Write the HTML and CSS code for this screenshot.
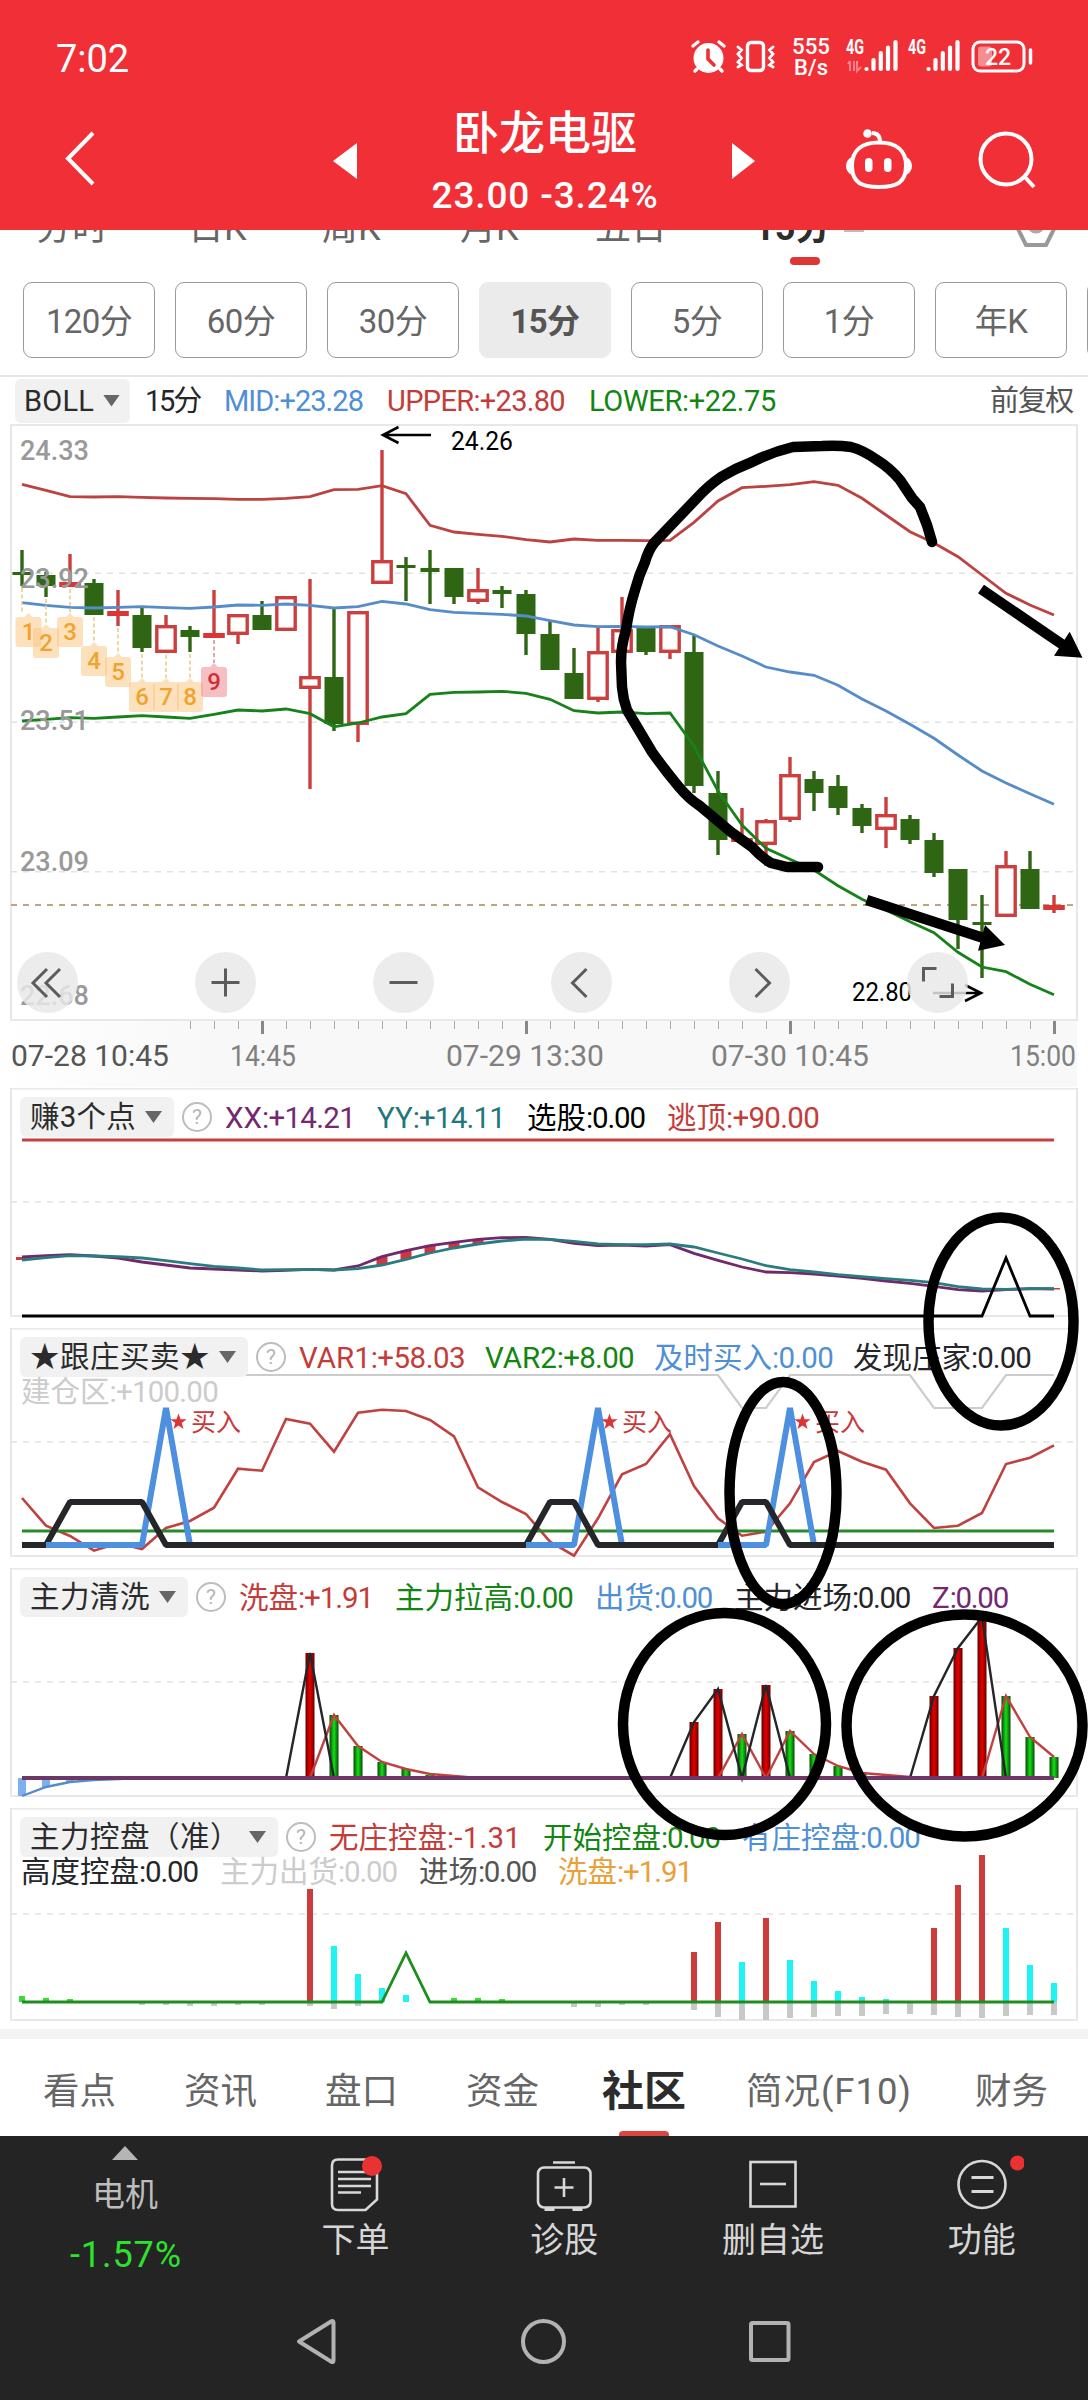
FILE: index.html
```html
<!DOCTYPE html>
<html lang="zh-CN">
<head>
<meta charset="utf-8">
<title>卧龙电驱</title>
<link rel="stylesheet" href="styles.css">
</head>
<body>
<div class="screen">
  <header class="top">
    <div class="status">
      <span class="clock fit" data-w="73">7:02</span>
      <svg class="status-icons" width="350" height="44" viewBox="688 36 350 44">
        <g stroke="#fff" fill="none" stroke-linecap="round">
          <circle cx="708.5" cy="59" r="15" fill="#fff" stroke="none"/>
          <path d="M693 47l5-4M719 43l5 4M697 70l-2 2M720 70l2 2" stroke-width="3.4"/>
          <path d="M708 51v9l6 6" stroke="#f12f37" stroke-width="3.6"/>
          <rect x="747.500" y="43.500" width="16" height="28" rx="3.500" stroke-width="3.400"/>
          <path d="M738 48l3.500 3-3.500 4 3.500 4-3.500 4 3.500 3-3.500 2M773 48l-3.500 3 3.500 4-3.500 4 3.500 4-3.500 3 3.500 2" stroke-width="2.800"/>
          <path d="M866.500 70v0M873.500 61v9M880.800 54v16M888 48.500v21.500M895.500 43v27M928.500 70v0M935.500 61v9M942.800 54v16M950 48.500v21.500M957.500 43v27" stroke-width="4.200"/>
          <rect x="973" y="43" width="51" height="29" rx="7" stroke-width="3"/>
          <path d="M1030.500 51v13" stroke-width="3.500"/>
        </g>
        <rect x="978" y="47.500" width="14" height="20" rx="3" fill="#fff" opacity=".45"/>
        <path d="M850 62v10M850 62l-2 3M854 62v10M857 62v10l4-4" stroke="#fff" stroke-width="2" opacity=".4" fill="none"/>
        <g fill="#fff" font-weight="500">
          <text x="792" y="55" font-size="22" textLength="38" lengthAdjust="spacingAndGlyphs">555</text>
          <text x="794" y="76" font-size="22" textLength="34">B/s</text>
          <text x="846" y="55" font-size="20" font-weight="700" textLength="18" lengthAdjust="spacingAndGlyphs">4G</text>
          <text x="908" y="55" font-size="20" font-weight="700" textLength="18" lengthAdjust="spacingAndGlyphs">4G</text>
          <text x="985" y="65.500" font-size="23" textLength="26">22</text>
        </g>
      </svg>
    </div>
    <div class="titlebar">
      <svg class="back" width="40" height="60" viewBox="60 128 40 60"><path d="M93 133L68 158.500L93 184" fill="none" stroke="#fff" stroke-width="4"/></svg>
      <svg class="prev" width="24" height="36" viewBox="0 0 24 36"><path d="M24 0v36L0 18z" fill="#fff"/></svg>
      <div class="title">
        <h1>卧龙电驱</h1>
        <p class="fit" data-w="227">23.00 -3.24%</p>
      </div>
      <svg class="next" width="24" height="36" viewBox="0 0 24 36"><path d="M0 0v36l23-18z" fill="#fff"/></svg>
      <svg class="robot" width="70" height="66" viewBox="844 126 70 66">
        <g fill="none" stroke="#fff" stroke-width="4">
          <path d="M879 142.500c17 0 27 8 27 23 0 17-9 21.500-27 21.500s-27-4.500-27-21.500c0-15 10-23 27-23zM880 142c0-6-3-9-8-9"/>
        </g>
        <circle cx="867.500" cy="133.500" r="4.300" fill="#fff"/>
        <path d="M852 157c-8 3-8 15 0 18zM906 157c8 3 8 15 0 18z" fill="#fff"/>
        <rect x="865" y="158" width="7.500" height="14" rx="3.750" fill="#fff"/><rect x="884" y="158" width="7.500" height="14" rx="3.750" fill="#fff"/>
      </svg>
      <svg class="search" width="62" height="62" viewBox="976 128 62 62"><g fill="none" stroke="#fff" stroke-width="4"><circle cx="1006" cy="159" r="25.500"/><path d="M1024 176l10 11"/></g></svg>
    </div>
  </header>

  <nav class="ktabs">
    <span>分时</span><span>日K</span><span>周K</span><span>月K</span><span>五日</span><span class="on">15分<i></i></span>
    <svg width="46" height="52" viewBox="1012 198 46 52"><path d="M1025 202h20l11 21-11 22h-20l-11-22z" fill="none" stroke="#999" stroke-width="4"/><circle cx="1035" cy="224" r="7.500" fill="none" stroke="#aaa" stroke-width="4"/></svg>
  </nav>
  <div class="periods">
    <button>120分</button><button>60分</button><button>30分</button><button class="on">15分</button><button>5分</button><button>1分</button><button>年K</button><button></button>
  </div>

  <div class="boll">
    <span class="chip"><span class="fit" data-w="70">BOLL</span><b class="caret"></b></span>
    <span class="fit c-dark" data-w="55">15分</span>
    <span class="fit c-blue" data-w="139">MID:+23.28</span>
    <span class="fit c-red" data-w="178">UPPER:+23.80</span>
    <span class="fit c-green" data-w="187">LOWER:+22.75</span>
    <span class="adj fit" data-w="83">前复权</span>
  </div>
  <div class="kline"><svg id="kline" width="1088" height="664" viewBox="0 424 1088 664"></svg></div>

  <section class="panel">
    <svg id="p1" width="1088" height="240" viewBox="0 1088 1088 240"></svg>
    <div class="legend">
      <div class="row"><span class="chip"><span class="fit" data-w="106">赚3个点</span><b class="caret"></b></span><em>?</em>
        <span class="fit c-purple" data-w="130">XX<i>:+14.21</i></span><span class="fit c-teal" data-w="128">YY<i>:+14.11</i></span><span class="fit c-black" data-w="118">选股<i>:0.00</i></span><span class="fit c-red" data-w="152">逃顶<i>:+90.00</i></span></div>
    </div>
  </section>
  <section class="panel tight">
    <svg id="p2" width="1088" height="240" viewBox="0 1328 1088 240"></svg>
    <div class="legend">
      <div class="row"><span class="chip"><span class="fit" data-w="180">★跟庄买卖★</span><b class="caret"></b></span><em>?</em>
        <span class="fit c-red" data-w="166">VAR1<i>:+58.03</i></span><span class="fit c-green" data-w="149">VAR2<i>:+8.00</i></span><span class="fit c-blue" data-w="179">及时买入<i>:0.00</i></span><span class="fit c-dark" data-w="178">发现庄家<i>:0.00</i></span></div>
      <div class="row two"><span class="fit c-light" data-w="197">建仓区<i>:+100.00</i></span></div>
    </div>
  </section>
  <section class="panel">
    <svg id="p3" width="1088" height="240" viewBox="0 1568 1088 240"></svg>
    <div class="legend">
      <div class="row"><span class="chip"><span class="fit" data-w="120">主力清洗</span><b class="caret"></b></span><em>?</em>
        <span class="fit c-red" data-w="134">洗盘<i>:+1.91</i></span><span class="fit c-green" data-w="178">主力拉高<i>:0.00</i></span><span class="fit c-blue" data-w="117">出货<i>:0.00</i></span><span class="fit c-dark" data-w="176">主力进场<i>:0.00</i></span><span class="fit c-purple" data-w="76">Z<i>:0.00</i></span></div>
    </div>
  </section>
  <section class="panel last">
    <svg id="p4" width="1088" height="221" viewBox="0 1808 1088 221"></svg>
    <div class="legend">
      <div class="row"><span class="chip"><span class="fit" data-w="210">主力控盘（准）</span><b class="caret"></b></span><em>?</em>
        <span class="fit c-red" data-w="192">无庄控盘<i>:-1.31</i></span><span class="fit c-green" data-w="177">开始控盘<i>:0.00</i></span><span class="fit c-blue" data-w="178">有庄控盘<i>:0.00</i></span></div>
      <div class="row two"><span class="fit c-dark" data-w="177">高度控盘<i>:0.00</i></span><span class="fit c-light" data-w="177">主力出货<i>:0.00</i></span><span class="fit c-grey" data-w="117">进场<i>:0.00</i></span><span class="fit c-orange" data-w="134">洗盘<i>:+1.91</i></span></div>
    </div>
  </section>

  <nav class="sections">
    <span>看点</span><span>资讯</span><span>盘口</span><span>资金</span><span class="on">社区</span><span class="fit" data-w="166">简况(F10)</span><span>财务</span>
  </nav>

  <footer class="bottom">
    <div class="actions">
      <div class="index"><svg width="26" height="14"><path d="M13 0l13 14H0z" fill="#b5b5b5"/></svg><span>电机</span><b class="fit" data-w="112">-1.57%</b></div>
      <div class="act"><svg width="60" height="60" viewBox="326 2153 60 60"><g fill="none" stroke="#d8d8d8" stroke-width="2.600"><path d="M339 2159.500h34q5 0 5 5v35l-11.500 10.500h-27.500q-6 0-6-6v-38.500q0-6 6-6z"/><path d="M339 2172h33M339 2179h33M339 2186h33M339 2192.500h23"/></g><circle cx="373" cy="2166" r="10" fill="#ea3232"/></svg><span>下单</span></div>
      <div class="act"><svg width="60" height="60" viewBox="534.500 2153 60 60"><g fill="none" stroke="#d8d8d8" stroke-width="2.600"><rect x="538.500" y="2167.500" width="52.500" height="40" rx="6"/><path d="M553.500 2162.500h22M555 2187.500h19M564.500 2178v19"/><path d="M545 2209h10M573 2209h10" stroke-width="4"/></g></svg><span>诊股</span></div>
      <div class="act"><svg width="60" height="60" viewBox="743 2153 60 60"><g fill="none" stroke="#d8d8d8" stroke-width="2.600"><rect x="750.500" y="2162" width="45" height="44.500"/><path d="M760 2184h26"/></g></svg><span>删自选</span></div>
      <div class="act"><svg width="84" height="60" viewBox="940.500 2153 84 60"><g fill="none" stroke="#d8d8d8" stroke-width="2.600"><circle cx="982.500" cy="2184.500" r="23.500"/><path d="M972 2177.500h22M972 2191.500h22" stroke-width="3"/></g><circle cx="1018" cy="2163" r="7.500" fill="#ea3232"/></svg><span>功能</span></div>
    </div>
    <div class="sysnav">
      <svg width="500" height="50" viewBox="292 2316 500 50"><g fill="none" stroke="#b2b2b2" stroke-width="4" stroke-linejoin="round"><path d="M299 2341.500L331 2321.500q2.500-1.500 2.500 1v38q0 2.500-2.500 1z"/><circle cx="543.500" cy="2341.500" r="20.500"/><rect x="751" y="2323" width="37.500" height="37" rx="1.500"/></g></svg>
    </div>
  </footer>

  <svg class="marks" width="1088" height="2400" viewBox="0 0 1088 2400">
    <g fill="none" stroke="#000" stroke-width="10.500">
      <ellipse cx="1001" cy="1321.500" rx="72.500" ry="104"/>
      <ellipse cx="783" cy="1493" rx="53.500" ry="111"/>
      <ellipse cx="724.500" cy="1724" rx="101.500" ry="111"/>
      <ellipse cx="964.500" cy="1725.500" rx="118" ry="111"/>
      <path stroke-linecap="round" stroke-linejoin="round" d="M932 542L927 525L920 507L912 498L900 480Q890 468 877 460Q863 450 851 447Q838 445 822 446L793 447Q772 452 752 462Q736 468 721 477Q708 486 697 498L654 543Q648 551 645 562Q639 575 635 590Q629 609 626 630Q621 646 621 662L622 687Q623 699 627 710L652 752Q664 769 679 787Q689 799 700 806L731 832L752 847Q761 857 771 863L787 867L818 867"/>
      <path d="M981 589L1066 647M866.700 900L985 938.500"/>
    </g>
    <path d="M1082.500 657.700L1069.700 631.700L1054 655.700zM1005 945L985 925L978 950.700z"/>
  </svg>
</div>
<script src="charts.js"></script>
</body>
</html>
```
FILE: styles.css
```css
* { box-sizing: border-box; margin: 0; padding: 0; }
body { background: #fff; font-family: Roboto, "Noto Sans CJK SC", sans-serif; color: #555; }
svg { display: block; flex: none; }
.screen { position: relative; width: 1088px; height: 2400px; overflow: hidden; display: flex; flex-direction: column; }
.fit { white-space: nowrap; display: block; flex: none; }

.top { height: 230px; background: #f12f37; color: #fff; flex: none; position: relative; z-index: 1; }
.status { height: 96px; padding: 18px 50px 0 56px; display: flex; justify-content: space-between; align-items: center; }
.clock { font-size: 38px; line-height: 44px; margin-top: 3px; }
.titlebar { height: 134px; display: flex; align-items: flex-start; padding-left: 60px; }
.back { margin-top: 32px; }
.prev { margin: 47px 0 0 233px; }
.title { width: 230px; margin: 8px 0 0 73px; text-align: center; display: flex; flex-direction: column; align-items: center; }
.title h1 { font-size: 46px; font-weight: 500; line-height: 58px; height: 58px; }
.title p { font-size: 37px; font-weight: 500; line-height: 46px; margin-top: 11px; }
.next { margin: 47px 0 0 72px; }
.robot { margin: 30px 0 0 88px; }
.search { margin: 32px 0 0 62px; }

.ktabs { height: 66px; margin-top: -24px; padding-left: 36px; display: flex; font-size: 36px; line-height: 44px; color: #666; flex: none; align-items: flex-start; }
.ktabs span { width: 136px; }
.ktabs span:nth-child(1) { width: 152px; }
.ktabs span:nth-child(2) { width: 134px; }
.ktabs span:nth-child(3) { width: 138px; }
.ktabs span:nth-child(4) { width: 135px; }
.ktabs span:nth-child(5) { width: 159px; }
.ktabs .on { width: 259px; font-weight: 700; color: #2e2e2e; background: linear-gradient(#bbb, #bbb) 90px 22px / 20px 4px no-repeat; }
.ktabs .on i { display: block; width: 30px; height: 8px; border-radius: 4px; background: #de3535; margin: 7px 0 0 36px; }
.ktabs svg { margin-top: -8px; }

.periods { height: 103px; padding: 10px 0 0 23px; display: flex; gap: 20px; overflow: hidden; flex: none; }
.periods button { width: 132px; height: 76px; flex: none; font: 33px Roboto, "Noto Sans CJK SC", sans-serif; color: #666; background: #fff; border: 1px solid #999; border-radius: 9px; letter-spacing: -.6px; padding-bottom: 3px; }
.periods .on { background: #ebebeb; border-color: #ebebeb; font-weight: 700; color: #555; }

.boll { height: 49px; border-top: 2px solid #e6e6e6; padding: 1px 15px; display: flex; align-items: center; font-size: 29px; line-height: 40px; gap: 24px; flex: none; }
.boll .fit:nth-child(2) { margin-left: -9px; }
.boll .adj { margin-left: auto; }
.chip { display: flex; align-items: center; gap: 9px; background: #f1f1f1; border-radius: 6px; color: #2b2b2b; flex: none; padding: 0 12px 0 10px; }
.boll .chip { height: 44px; width: 115px; padding-left: 9px; }
.caret { width: 17px; height: 12px; background: #666; clip-path: polygon(0 0, 100% 0, 50% 100%); flex: none; }
.kline { height: 664px; flex: none; }

.panel { display: grid; height: 240px; flex: none; }
.panel > * { grid-area: 1 / 1; }
.last { height: 221px; }
.legend { padding: 9px 0 0 20px; font-size: 29.5px; z-index: 1; }
.legend i { font-style: normal; }
.row { display: flex; align-items: center; gap: 22px; height: 40px; line-height: 42px; }
.row > .fit { padding-top: 1px; }
.tight .row { gap: 20px; }
.row .chip { height: 40px; }
.row.two { height: 27px; line-height: 27px; padding-left: 1px; margin-top: 1px; }
.row em { width: 30px; height: 30px; border: 2px solid #bdbdbd; border-radius: 50%; font: 21px/26px Roboto, sans-serif; text-align: center; color: #b5b5b5; margin: 0 -9px 0 -14px; flex: none; }
.tight .row em { margin: 0 -7px 0 -12px; }

.c-dark { color: #24262a; }
.c-black { color: #000; }
.c-blue { color: #4f8fd6; }
.c-red { color: #c43c3a; }
.c-green { color: #128512; }
.c-purple { color: #74286f; }
.c-teal { color: #22777c; }
.c-light { color: #ccc; }
.c-grey { color: #555; }
.c-orange { color: #e9a03a; }
text { font-family: Roboto, "Noto Sans CJK SC", sans-serif; }

.sections { height: 107px; border-top: 10px solid #f4f4f4; padding-left: 43px; display: flex; gap: 68px; align-items: center; font-size: 36.5px; line-height: 89px; color: #666; flex: none; white-space: nowrap; }
.sections span { flex: none; padding-top: 8px; }
.sections .fit { margin-right: -5px; }
.sections .on { position: relative; font-size: 42px; font-weight: 700; color: #2c2c2c; margin: 0 -8px 0 -5px; }
.sections .on::after { content: ""; position: absolute; left: 17px; bottom: 0; width: 50px; height: 5px; border-radius: 4px 4px 0 0; background: #dc4540; }

.bottom { height: 264px; background: #242424; flex: none; }
.actions { display: flex; height: 160px; color: #d6d6d6; font-size: 34px; padding-left: 21px; }
.index { width: 208px; display: flex; flex-direction: column; align-items: center; color: #bdbdbd; padding: 10px 0 0 0; font-size: 33px; }
.index span { line-height: 40px; margin-top: 15px; }
.index b { font-weight: 400; font-size: 36px; color: #2fe12f; line-height: 44px; margin-top: 18px; margin-left: 2px; }
.act { width: 208.8px; display: flex; flex-direction: column; align-items: center; padding-top: 17px; }
.act:nth-child(2) { margin-left: 22px; }
.act span { line-height: 44px; margin-top: 5px; }
.sysnav { display: flex; padding: 20px 0 0 292px; }

.marks { position: absolute; left: 0; top: 0; z-index: 2; pointer-events: none; }
```
FILE: charts.js
```js
const X = i => 22 + 24 * i;
const COUNT = 44;

/* ---- drawing helpers ---- */
const pts = (ys, from = 0) => ys.map((y, k) => `${X(k + from)},${y}`).join(' ');
const line = (ys, color, w = 2.8, from = 0) =>
  `<polyline points="${pts(ys, from)}" fill="none" stroke="${color}" stroke-width="${w}"/>`;
const rect = (x, y, w, h, fill, extra = '') =>
  `<rect x="${x}" y="${y}" width="${w}" height="${h}" fill="${fill}" ${extra}/>`;
const dash = (y, c = '#e2e2e2', d = '6 6', w = 1.6) =>
  `<path d="M11 ${y}H1077" stroke="${c}" stroke-width="${w}" stroke-dasharray="${d}"/>`;
const frame = (t, b) =>
  `<rect x="11" y="${t}" width="1066" height="${b - t}" fill="none" stroke="#e8e8e8" stroke-width="2"/>`;
const label = (x, y, s, w, fill, size, extra = '') =>
  `<text x="${x}" y="${y}" font-size="${size}" fill="${fill}" textLength="${w}" lengthAdjust="spacingAndGlyphs" ${extra}>${s}</text>`;
const put = (id, html) => { document.getElementById(id).innerHTML = html; };
/* flat series at `base` with listed exceptions */
const spikes = (base, map) => Array.from({ length: COUNT }, (_, i) => map[i] ?? base);

/* ---- K line ---- */
const RED = '#cb3f3f', GREEN = '#2f6614';
const upper = [484.3,490.3,496.7,497,496.7,497.3,498,498.3,498.7,499.3,499.3,498.3,496.7,489.7,489.3,485.7,493.7,525.3,532,534.3,536.3,539.7,542,539,540.3,540.3,540.7,540.3,522.3,501,487.7,486.3,484.7,481.7,485.3,498.3,515,531.7,543,556.7,575,593.3,605,615];
const mid = [602.7,605.3,607.3,608,607.3,606.7,607.7,608.3,607,605,605.3,604,605.3,608,606.7,601.3,604,609.7,612.3,613.3,614.3,616,620.7,625,626.7,626.3,627,626.7,634.7,646,656,667,672,675.3,685.3,699,711,724.3,738.3,755,771,783,793.7,804.3];
const lower = [721,719.3,717.7,718.3,717,715.7,717,718.3,714.3,710,711,709,713.7,726.7,723,717,713.7,694.3,692.3,692,691.3,693.3,699.3,710.7,713,712,713.7,713,746,791,825,848.3,859.3,870,885.7,899.3,910,921.7,932.7,952.3,967,971.7,984.3,994.7];
/* [up?, high, body top, body bottom, low] */
const candles = [
  [0,550,572,575,586],[0,572,575,586,597],[1,554,582,587,587],[0,579,583,615,615],[1,590,611,616,626],
  [0,607,615,648,652],[1,615,625,653,653],[0,626,630,637,652],[1,590,633,638,638],[1,614,614,635,644],
  [0,601,615,630,630],[1,596,596,631,631],[1,579,676,689,789],[0,607,677,724,731],[1,611,611,725,742],
  [1,450,560,584,584],[0,557,565,568,601],[0,550,568,572,604],[0,568,568,597,604],[1,568,589,602,604],
  [0,586,590,594,608],[0,590,594,634,655],[0,620,634,670,670],[0,648,673,699,699],[1,627,651,700,702],
  [1,597,629,653,653],[0,628,628,652,655],[1,625,625,653,659],[0,635,652,786,793],[0,771,793,840,855],
  [1,808,838,842,842],[1,819,820,845,866],[1,757,774,820,822],[0,771,779,793,811],[0,775,786,808,815],
  [0,804,808,826,833],[1,797,814,830,848],[0,815,819,840,844],[0,833,840,873,877],[0,869,869,920,949],
  [0,895,922,925,978],[1,851,865,917,917],[0,851,869,909,909],[1,895,905,910,913]];

let k = frame(425, 1020) + dash(573.3) + dash(722.3) + dash(871.7) + dash(905, '#bda67c', '6 6', 2);
candles.forEach(([up, h, t, b, l], i) => {
  const x = X(i), c = up ? RED : GREEN;
  k += rect(x - 1.7, h, 3.4, t - h, c) + rect(x - 1.7, b, 3.4, l - b, c);
  if (!up) k += rect(x - 9.5, t, 19, b - t, c);
  else if (b - t < 7) k += rect(x - 10.8, t, 21.6, b - t, '#dc3535');
  else k += rect(x - 9.2, t + 1.7, 18.4, b - t - 3.4, '#fff', `stroke="${RED}" stroke-width="3.4"`);
});
k += line(upper, '#bb4341') + line(mid, '#568cc8', 2.8) + line(lower, '#17821a', 2.8);

/* nine-turn badges: [candle, centre x, tip y] */
[[0,28.5,613],[1,46,624],[2,70,613],[3,94,642],[4,118,653],[5,142,678],[6,166,678],[7,190,678],[8,214,663]].forEach(([i, cx, y], n) => {
  const hot = n === 8;
  k += `<path d="M${X(i)} ${candles[i][4] + 2}V${y}" stroke="${hot ? '#c99' : '#e8cf90'}" stroke-width="1.6" stroke-dasharray="4 2.5"/>`;
  k += `<path d="M${cx - 10} ${y + 4}h6l4-4l4 4h6q3 0 3 3v24q0 3-3 3h-20q-3 0-3-3v-24q0-3 3-3z" fill="${hot ? '#f08a90' : '#fcc986'}" opacity=".55"/>`;
  k += `<text x="${cx}" y="${y + 27}" font-size="24" font-weight="500" text-anchor="middle" fill="${hot ? '#cf2f38' : '#efa42d'}">${n + 1}</text>`;
});
[['24.33',460],['23.92',588],['23.51',730],['23.09',871],['22.68',1005]].forEach(([s, y]) => { k += label(20, y, s, 69, '#999', 28.5, 'font-weight="500"'); });
k += label(451, 450, '24.26', 62, '#000', 25.5) + label(852, 1001, '22.80', 60, '#000', 25.5);
k += '<path d="M431 435H383M398.500 427L383 435L398.500 443M933 993H981M965 985L981 993L965 1001" fill="none" stroke="#000" stroke-width="2.600"/>';

/* floating chart controls */
const icons = ['M47 969L33 983L47 997M60 969L46 983L60 997', 'M211.500 982.500h28M225.500 968.500v28', 'M389.500 982.500h28',
  'M586.500 969L572.500 983L586.500 997', 'M755.500 969L769.500 983L755.500 997', 'M936.500 968.500h-13v13M939.500 996.500h13v-13'];
icons.forEach((d, i) => {
  k += `<circle cx="${47.5 + 178 * i}" cy="982.500" r="30.500" fill="#e8e8e8" opacity=".84"/><path d="${d}" fill="none" stroke="#5c5c5c" stroke-width="3"/>`;
});

/* time axis */
k += '<defs><linearGradient id="ax"><stop offset="0" stop-color="#fff"/><stop offset=".2" stop-color="#f8f8f8"/><stop offset="1" stop-color="#f8f8f8"/></linearGradient></defs>' + rect(0, 1021, 1077, 66, 'url(#ax)');
for (let x = 190; x <= 1054; x += 24) {
  const major = (x - 262) % 264 === 0;
  k += major ? rect(x - 1, 1021, 3, 13, '#888') : rect(x, 1021, 1, 8, '#aaa');
}
[['07-28 10:45',11,158,'#555'],['14:45',230,66,'#808080'],['07-29 13:30',446,158,'#808080'],['07-30 10:45',711,158,'#808080'],['15:00',1010,66,'#808080']]
  .forEach(([s, x, w, c]) => { k += label(x, 1066, s, w, c, 29); });
put('kline', k);

/* ---- panel 1 ---- */
const xx = [1257,1255.7,1254.7,1256,1258,1262,1265,1268,1269,1270,1271,1270.3,1269.3,1270,1266,1256.7,1250.7,1245.7,1242.3,1239.3,1237.7,1237.3,1239.3,1243.3,1245.7,1245,1246,1244.7,1253.3,1260.3,1267,1272,1272.7,1274,1276,1278.3,1281,1283.3,1286.3,1289.7,1291,1289.7,1288.7,1289];
const yy = [1260,1257.7,1255.7,1256,1256.7,1258,1260.7,1263.7,1266.3,1268,1270,1269.7,1269.3,1270,1268.7,1265,1259.3,1253,1248,1244,1241,1239,1239.3,1241.3,1244,1244.7,1244.7,1244,1247,1253,1259,1265.7,1269.7,1272,1274.7,1276.7,1278.7,1280.3,1282.7,1286.7,1289,1289.3,1288.7,1288.7];
let a = frame(1088.5, 1316) + dash(1202) + rect(16, 1257, 12, 3, '#d23a3a') + rect(1050, 1288, 10, 1.5, '#d23a3a');
for (let i = 15; i < 20; i++) a += rect(X(i) - 5.5, xx[i], 11, yy[i] - xx[i], '#d03540');
a += line(spikes(1140, {}), '#c83e3c', 3) + line(xx, '#70296b', 2.8) + line(yy, '#2b7c80', 2.8) + line(spikes(1316, { 41: 1258 }), '#000', 2.8);
put('p1', a);

/* ---- panel 2 ---- */
const var1 = [1498,1525.7,1536,1550.7,1543.3,1549,1528,1521,1507.7,1468.7,1470.7,1419,1423.7,1451.7,1412.7,1409.7,1411,1420,1436.3,1487.3,1502,1514,1541.7,1555.7,1518.3,1474.3,1464,1434.3,1486,1518.3,1535.7,1531.7,1503.3,1462,1451,1461.7,1469.7,1503.3,1528,1525.7,1513,1464,1457.7,1445.3];
let b = frame(1328.5, 1556) + dash(1442)
  + line(spikes(1375, { 30: 1408, 31: 1408, 38: 1408, 39: 1408, 40: 1408 }), '#ccc', 2.2)
  + line(var1, '#c04240', 2.6) + line(spikes(1531, {}), '#2a8a2a', 2.8)
  + `<polyline points="${pts(spikes(1545, { 6: 1408, 24: 1408, 32: 1408 }))}" fill="none" stroke="#4d90e0" stroke-width="6" stroke-linejoin="bevel"/>`;
const blk = 'fill="none" stroke="#24262a" stroke-width="6" stroke-linejoin="bevel"';
b += `<path ${blk} d="M22 1545H46L70 1502H142L166 1545H526L550 1502H574L598 1545H718L742 1502H766L790 1545H1054"/>`;
b += '<path d="M46 1545H142M526 1545H574M718 1545H766" stroke="#4d90e0" stroke-width="6"/>';
[170, 601, 794].forEach(x => {
  b += `<path transform="translate(${x + 8.5} 1422) scale(8.500)" fill="#dd3535" d="M0-1L.24-.31L.95-.31L.38.12L.59.81L0 .4L-.59.81L-.38.12L-.95-.31L-.24-.31Z"/>` + label(x + 21, 1431, '买入', 50, '#c83a3a', 25);
});
put('p2', b);

/* ---- panel 3 ---- */
const reds = { 12: 1653, 28: 1722, 29: 1689, 31: 1685, 38: 1696, 39: 1648, 40: 1617 };
const greens = { 13: 1715, 14: 1746, 15: 1762, 16: 1769, 17: 1775, 30: 1734, 32: 1731, 33: 1754, 34: 1766, 35: 1772, 41: 1696, 42: 1737, 43: 1757 };
let c = '<defs><linearGradient id="gr"><stop offset="0" stop-color="#600"/><stop offset=".5" stop-color="#e80000"/><stop offset="1" stop-color="#600"/></linearGradient><linearGradient id="gg"><stop offset="0" stop-color="#064806"/><stop offset=".5" stop-color="#15e015"/><stop offset="1" stop-color="#064806"/></linearGradient></defs>';
c += frame(1568.5, 1796) + dash(1682);
Object.entries(reds).forEach(([i, y]) => { c += rect(X(+i) - 4.5, y, 9, 1778 - y, 'url(#gr)'); });
Object.entries(greens).forEach(([i, y]) => { c += rect(X(+i) - 4.5, y, 9, 1778 - y, 'url(#gg)'); });
c += rect(18, 1778, 8, 18, '#7fb0ee') + rect(42, 1778, 8, 9, '#7fb0ee') + rect(66, 1778, 8, 4, '#7fb0ee');
c += line([1796, 1787, 1782, 1780, 1779, 1778], '#568cc8', 2.4)
  + line(spikes(1778, { ...greens, 17: 1774, 18: 1776, 35: 1773, 36: 1775, 37: 1777 }), '#c04240', 2.4)
  + line(spikes(1778, reds), '#24262a', 2.4) + line(spikes(1778, {}), '#6d3768', 4);
put('p3', c);

/* ---- panel 4 ---- */
const r4 = { 12: 1889, 28: 1952, 29: 1922, 31: 1918, 38: 1928, 39: 1885, 40: 1855 };
const c4 = { 13: 1946, 14: 1974, 15: 1988, 16: 1995, 30: 1962, 32: 1960, 33: 1981, 34: 1991, 35: 1997, 36: 1999, 41: 1928, 42: 1965, 43: 1983 };
const d4 = { 5: 2005, 6: 2005, 7: 2006, 8: 2006, 9: 2005, 10: 2005, 12: 2006, 13: 2009, 14: 2006, 23: 2007, 24: 2007, 25: 2005, 26: 2005, 28: 2010, 29: 2017, 30: 2020, 31: 2020, 32: 2018, 33: 2017, 34: 2016, 35: 2016, 36: 2014, 37: 2014, 38: 2015, 39: 2017, 40: 2018, 41: 2016, 42: 2015, 43: 2015 };
const g4 = { 0: 1996, 1: 1998, 2: 1999, 18: 1998, 19: 1998, 20: 1999 };
let e = frame(1808.5, 2020) + dash(1914);
const bars = (m, col) => Object.entries(m).forEach(([i, y]) => { e += rect(X(+i) - 3, Math.min(y, 2002), 6, Math.abs(2002 - y), col); });
bars(d4, '#c8c8c8'); bars(r4, '#cd3c3c'); bars(c4, '#1ff4f4'); bars(g4, '#35dd35');
e += line(spikes(2002, { 16: 1953 }), '#1f8d1f', 2.8);
put('p4', e);

/* ---- tighten digits so each label takes its column width ---- */
document.querySelectorAll('.fit').forEach(el => {
  const target = el.querySelector('i') || el;
  const n = target.textContent.length;
  const r = document.createRange();
  r.selectNodeContents(el);
  target.style.letterSpacing = (el.dataset.w - r.getBoundingClientRect().width) / n + 'px';
});
```
